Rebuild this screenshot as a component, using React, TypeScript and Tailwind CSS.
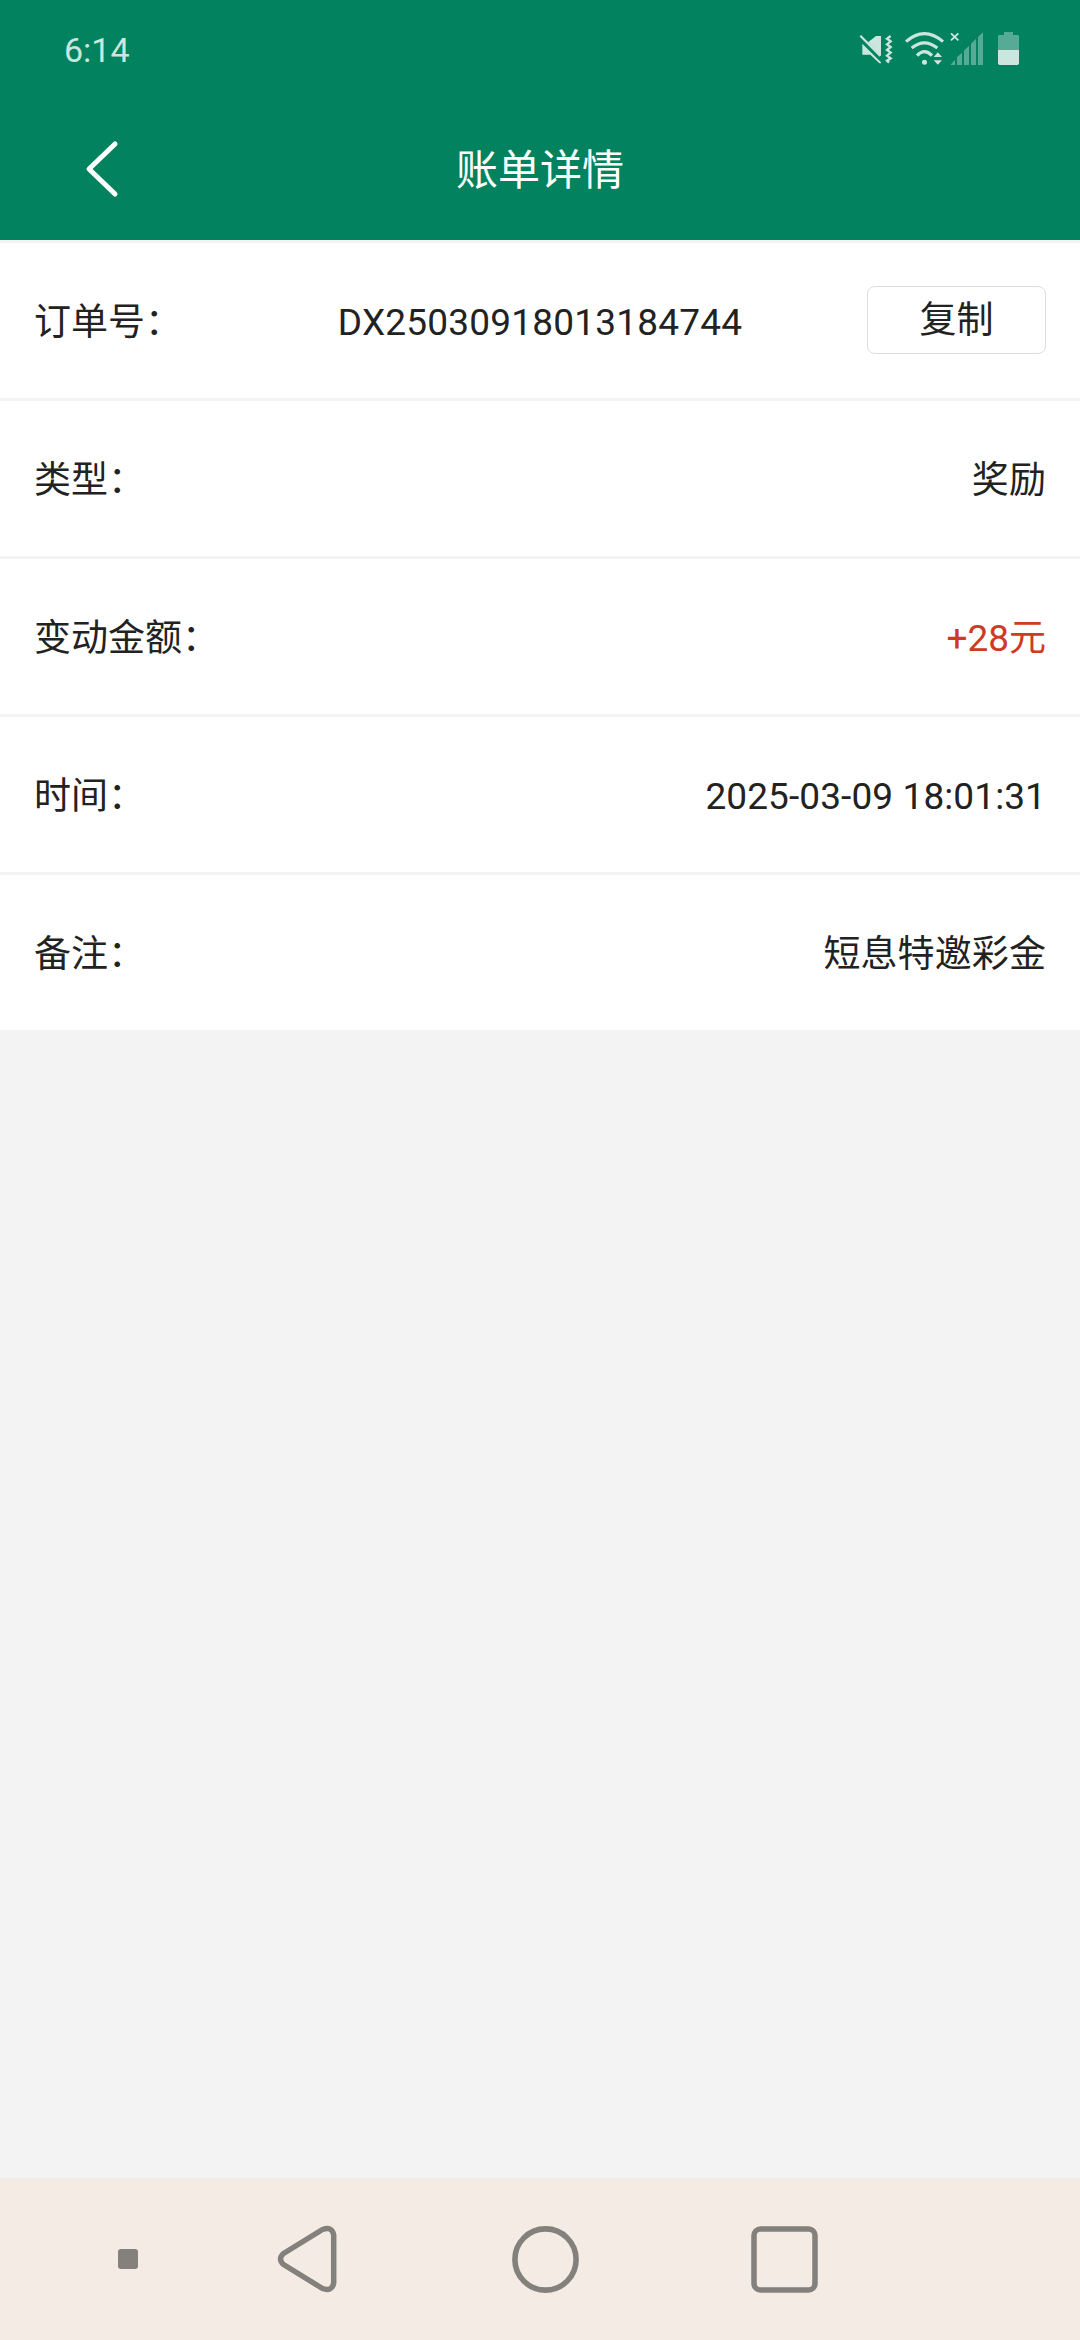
import React from 'react';

const billRows = [
  { label: '订单号：', value: 'DX25030918013184744', copyable: true },
  { label: '类型：', value: '奖励' },
  { label: '变动金额：', value: '+28元', highlight: true },
  { label: '时间：', value: '2025-03-09 18:01:31' },
  { label: '备注：', value: '短息特邀彩金' },
];

function StatusIcons() {
  return (
    <div className="flex items-center text-[#cce6df]">
      {/* 静音震动 */}
      <svg className="w-[34px] h-[34px]" viewBox="57 36 102 102" fill="none">
        <path d="M84 67 L108 48 H123 V108 Z" fill="currentColor" />
        <path d="M67 71 L123 127 V130 H118 L91 104 H67 Z" fill="currentColor" />
        <path d="M61 47 L121 108" stroke="currentColor" strokeWidth="6.5" />
        <path d="M152 48 L141 56 L152 64 L141 73 L152 81 L141 90 L152 98 L141 107 L152 115 L141 122 L147 128" stroke="currentColor" strokeWidth="7" />
      </svg>
      {/* Wi-Fi */}
      <svg className="w-[39px] h-[34px] ml-[12px]" viewBox="195 36 117 102" fill="none">
        <path d="M198 65 Q253 17 309 65" stroke="currentColor" strokeWidth="9.5" />
        <path d="M215 84 Q253 53 292 84" stroke="currentColor" strokeWidth="9.5" />
        <path d="M231 107 Q253 83 276 107" stroke="currentColor" strokeWidth="9.5" />
        <circle cx="253.5" cy="127" r="7.5" fill="currentColor" />
        <path d="M281 111 L293.5 97 L306 111 Z M281 121 H306 L293.5 134 Z" fill="currentColor" />
      </svg>
      {/* 信号 */}
      <svg className="w-[34px] h-[34px] ml-[6px]" viewBox="330 36 102 102" fill="none">
        <path d="M333 40 L355 61 M355 40 L333 61" stroke="currentColor" strokeWidth="5.5" />
        <path
          d="M331 135 L345 119 V135 Z M351 135 V112 L366 98 V135 Z M372 135 V92 L387 77 V135 Z M393 135 V71 L408 56 V135 Z M414 135 V51 L429 37 V135 Z"
          fill="#55ab94"
        />
      </svg>
      {/* 电池 */}
      <svg className="w-[21px] h-[34px] ml-[14px]" viewBox="474 36 63 102" fill="none">
        <path d="M492 36 H519 V45 H534 L537 48 V90 H474 V48 L477 45 H492 Z" fill="#55ab94" />
        <path d="M474 90 H537 V131 L533 135 H478 L474 131 Z" fill="currentColor" />
      </svg>
    </div>
  );
}

export default function App() {
  return (
    <div className="w-[1080px] h-[2340px] flex flex-col bg-[#f3f3f3] text-[#222222] font-[Roboto,'Noto_Sans_CJK_SC',sans-serif] overflow-hidden">
      {/* Header */}
      <header className="h-[240px] shrink-0 bg-[#02825e] text-white">
        <div className="h-[98px] pl-[64px] pr-[61px] flex items-center justify-between">
          <span className="text-[34px] leading-none text-[#cce6df] pt-[2px]">6:14</span>
          <StatusIcons />
        </div>
        <div className="h-[142px] grid grid-cols-3 items-center px-[84px]">
          <button className="w-[36px] h-[60px]" aria-label="返回">
            <svg className="w-[36px] h-[60px]" viewBox="0 0 36 60" fill="none" stroke="currentColor" strokeWidth="5" strokeLinecap="round" strokeLinejoin="round">
              <path d="M31 5 L5 30 L31 55" />
            </svg>
          </button>
          <h1 className="text-[42px] leading-[60px] text-center pt-[4px]">账单详情</h1>
        </div>
      </header>

      {/* 账单信息 */}
      <main className="flex-1">
        {billRows.map((row) => (
          <div
            key={row.label}
            className="h-[158px] border-t-[3px] border-[#f3f3f3] bg-white px-[34px] flex items-center justify-between text-[37px] leading-[54px]"
          >
            {row.copyable ? (
              <>
                <span className="w-[179px] pt-[5px] whitespace-nowrap">{row.label}</span>
                <span className="pt-[5px] tracking-[0.2px]">{row.value}</span>
                <button className="w-[179px] h-[68px] mb-[1px] pt-[2px] border border-[#dddddd] rounded-[8px] leading-[54px]">复制</button>
              </>
            ) : (
              <>
                <span className="pt-[5px]">{row.label}</span>
                <span className={row.highlight ? 'pt-[5px] text-[#cf3a26]' : 'pt-[5px] tracking-[0.1px]'}>{row.value}</span>
              </>
            )}
          </div>
        ))}
      </main>

      {/* 系统导航栏 */}
      <nav className="h-[162px] shrink-0 bg-[#f3ebe4] flex items-center pl-[118px] text-[#84807c]">
        <div className="w-[20px] h-[20px] rounded-[3px] bg-[#84807c]" />
        <svg className="w-[60px] h-[68px] ml-[139px]" viewBox="0 0 60 68" fill="none" stroke="currentColor" strokeWidth="5.5" strokeLinejoin="round">
          <path d="M45.5 4.5 L6.5 28.5 Q0.5 34 6.5 39.5 L45.5 63.5 Q55 67 56.7 58 V10 Q55 1 45.5 4.5 Z" />
        </svg>
        <svg className="w-[67px] h-[67px] ml-[175px]" viewBox="0 0 67 67" fill="none" stroke="currentColor" strokeWidth="5.6">
          <circle cx="33.5" cy="33.5" r="30.6" />
        </svg>
        <svg className="w-[67px] h-[67px] ml-[172px]" viewBox="0 0 67 67" fill="none" stroke="currentColor" strokeWidth="5.5">
          <rect x="3" y="3" width="61" height="61" rx="6.5" />
        </svg>
      </nav>
    </div>
  );
}
